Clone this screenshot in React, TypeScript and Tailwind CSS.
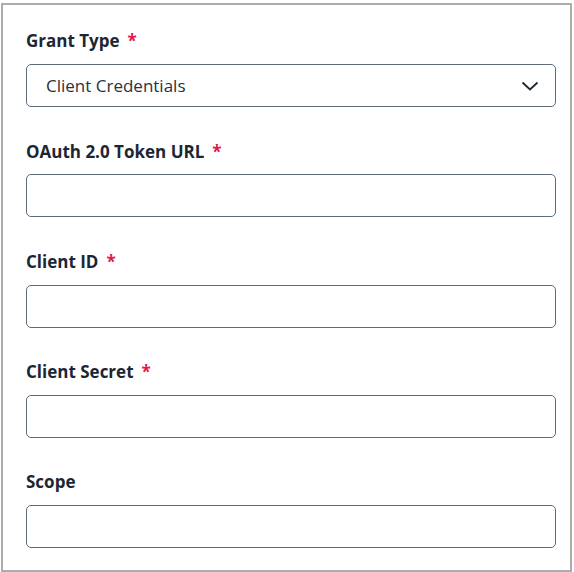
const FIELDS = [
  { label: 'OAuth 2.0 Token URL', required: true },
  { label: 'Client ID', required: true },
  { label: 'Client Secret', required: true },
  { label: 'Scope', required: false },
];

function Label({ text, required }: { text: string; required: boolean }) {
  return (
    <label className="flex items-center h-6 mb-[11px] text-[17px] font-bold text-[#1d2633]">
      {text}
      {required && <span className="ml-2 text-[#e3174b]">*</span>}
    </label>
  );
}

export default function App() {
  return (
    <div style={{ fontFamily: '"Open Sans", "Liberation Sans", sans-serif' }} className="bg-white">
      <div className="ml-[1px] mt-[3px] w-[571px] h-[569px] border-2 border-[#acacac] pl-[23px] pt-[24px]">
        <div className="flex flex-col gap-[32.3px] w-[530px]">
          <div>
            <Label text="Grant Type" required />
            <button className="w-full h-[43px] flex items-center justify-between pl-[19px] pr-4 border border-[#5d6b7b] rounded-[5px] bg-white text-[17px] text-[#2a323c]">
              <span>Client Credentials</span>
              <svg width="18" height="12" viewBox="0 0 18 12" fill="none">
                <path d="M1.5 2.5 L9 9.5 L16.5 2.5" stroke="#1d2633" strokeWidth="1.8" />
              </svg>
            </button>
          </div>
          {FIELDS.map(f => (
            <div key={f.label}>
              <Label text={f.label} required={f.required} />
              <input className="block w-full h-[43px] border border-[#5d6b7b] rounded-[5px] px-3 bg-white outline-none" />
            </div>
          ))}
        </div>
      </div>
    </div>
  );
}
